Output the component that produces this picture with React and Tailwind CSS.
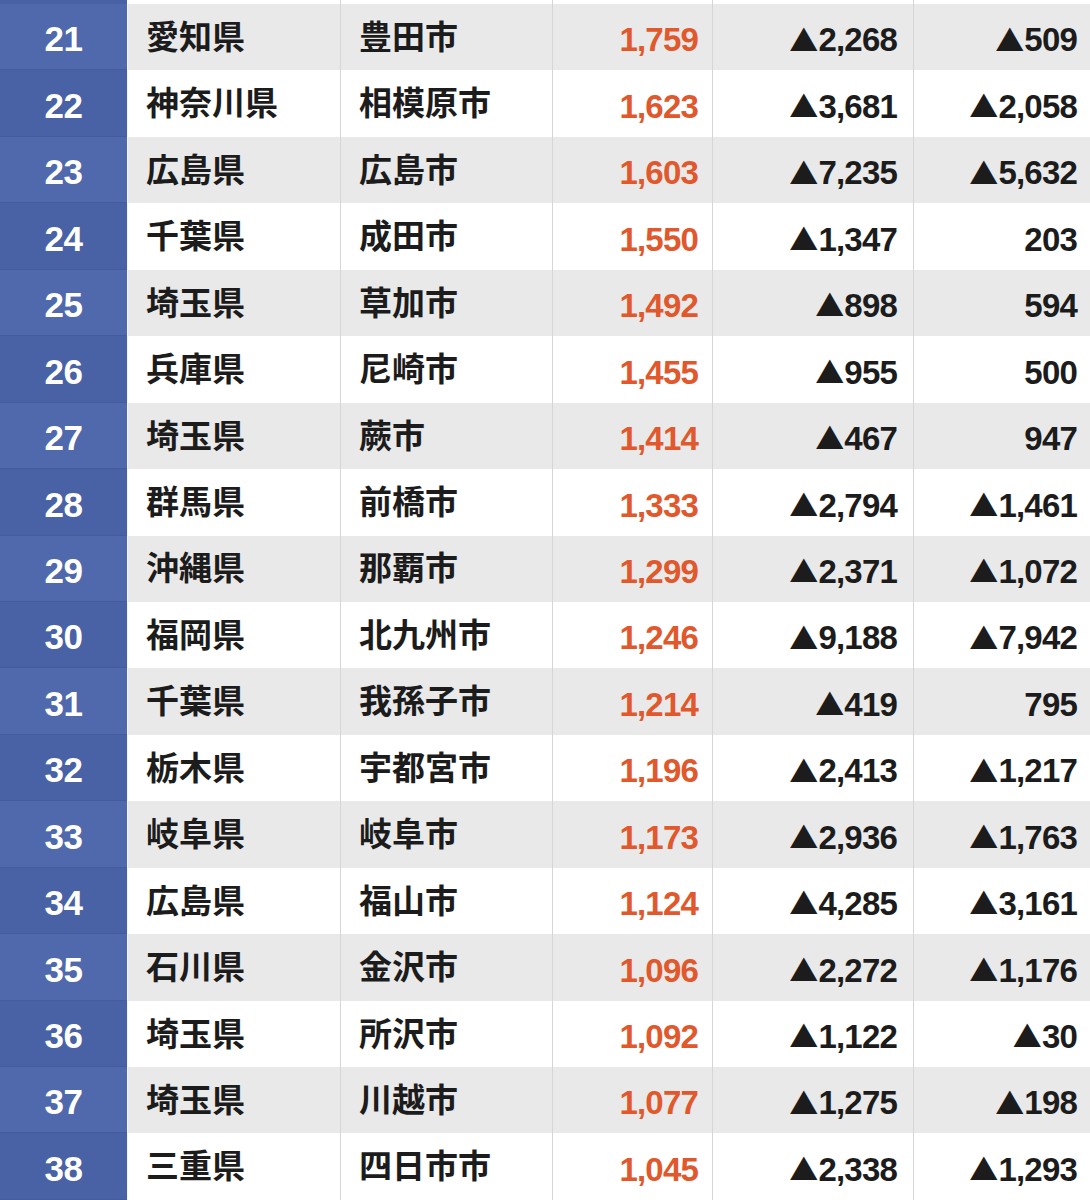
import React from "react";

const rows = [
  [21, "愛知県", "豊田市", "1,759", "▲2,268", "▲509"],
  [22, "神奈川県", "相模原市", "1,623", "▲3,681", "▲2,058"],
  [23, "広島県", "広島市", "1,603", "▲7,235", "▲5,632"],
  [24, "千葉県", "成田市", "1,550", "▲1,347", "203"],
  [25, "埼玉県", "草加市", "1,492", "▲898", "594"],
  [26, "兵庫県", "尼崎市", "1,455", "▲955", "500"],
  [27, "埼玉県", "蕨市", "1,414", "▲467", "947"],
  [28, "群馬県", "前橋市", "1,333", "▲2,794", "▲1,461"],
  [29, "沖縄県", "那覇市", "1,299", "▲2,371", "▲1,072"],
  [30, "福岡県", "北九州市", "1,246", "▲9,188", "▲7,942"],
  [31, "千葉県", "我孫子市", "1,214", "▲419", "795"],
  [32, "栃木県", "宇都宮市", "1,196", "▲2,413", "▲1,217"],
  [33, "岐阜県", "岐阜市", "1,173", "▲2,936", "▲1,763"],
  [34, "広島県", "福山市", "1,124", "▲4,285", "▲3,161"],
  [35, "石川県", "金沢市", "1,096", "▲2,272", "▲1,176"],
  [36, "埼玉県", "所沢市", "1,092", "▲1,122", "▲30"],
  [37, "埼玉県", "川越市", "1,077", "▲1,275", "▲198"],
  [38, "三重県", "四日市市", "1,045", "▲2,338", "▲1,293"],
];

const num = { fontFamily: '"Liberation Sans", "Noto Sans CJK JP", sans-serif' };
const jp = { fontFamily: '"Noto Sans CJK JP", "Noto Sans", sans-serif' };

function Num({ v }) {
  if (v.startsWith("▲")) {
    return (
      <span className="flex items-center">
        <span
          className="text-[29px] leading-none mr-[1px] relative top-[-1px]"
          style={jp}
        >
          ▲
        </span>
        <span>{v.slice(1)}</span>
      </span>
    );
  }
  return <span>{v}</span>;
}

export default function App() {
  return (
    <div className="w-[1090px] h-[1200px] overflow-hidden bg-white">
      <div className="grid grid-cols-[127px_214px_212px_160px_201px_1fr] h-[4px]">
        <div className="bg-[#4961a5]" />
        <div className="border-r border-[#d6d6d6]" />
        <div className="border-r border-[#d6d6d6]" />
        <div className="border-r border-[#d6d6d6]" />
        <div className="border-r border-[#d6d6d6]" />
        <div />
      </div>
      {rows.map((r, i) => {
        const odd = i % 2 === 0;
        return (
          <div
            key={r[0]}
            className={`grid grid-cols-[127px_214px_212px_160px_201px_1fr] h-[66.44px] ${
              odd ? "bg-[#e9e9e9]" : "bg-white"
            }`}
          >
            <div
              className={`flex items-center justify-center pt-[6px] text-white font-bold text-[35px] tracking-[-0.5px] border-b border-[#445c9e] ${
                odd ? "bg-[#5068ac]" : "bg-[#4961a5]"
              }`}
              style={num}
            >
              {r[0]}
            </div>
            <div
              className="flex items-center pl-[18px] pb-[3px] text-[33px] font-bold text-[#1c1c1c] border-r border-[#d6d6d6] border-l border-l-[#f4f4f4]"
              style={jp}
            >
              {r[1]}
            </div>
            <div
              className="flex items-center pl-[18px] pb-[3px] text-[33px] font-bold text-[#1c1c1c] border-r border-[#d6d6d6]"
              style={jp}
            >
              {r[2]}
            </div>
            <div
              className="flex items-center justify-end pt-[6px] pr-[14px] text-[33px] tracking-[-0.8px] font-bold text-[#e0582c] border-r border-[#d6d6d6]"
              style={num}
            >
              {r[3]}
            </div>
            <div
              className="flex items-center justify-end pt-[6px] pr-[16px] text-[33px] tracking-[-0.8px] font-bold text-[#1c1c1c] border-r border-[#d6d6d6]"
              style={num}
            >
              <Num v={r[4]} />
            </div>
            <div
              className="flex items-center justify-end pt-[6px] pr-[13px] text-[33px] tracking-[-0.8px] font-bold text-[#1c1c1c]"
              style={num}
            >
              <Num v={r[5]} />
            </div>
          </div>
        );
      })}
    </div>
  );
}
